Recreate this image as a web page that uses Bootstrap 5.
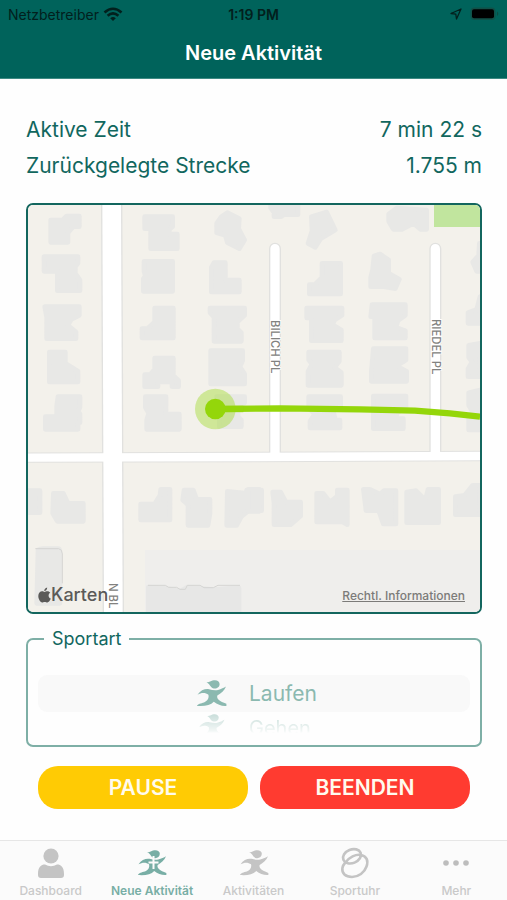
<!DOCTYPE html>
<html lang="de">
<head>
<meta charset="utf-8">
<meta name="viewport" content="width=device-width, initial-scale=1">
<title>Neue Aktivität</title>
<link href="https://cdn.jsdelivr.net/npm/bootstrap@5.3.0/dist/css/bootstrap.min.css" rel="stylesheet">
<style>
body{font-family:Inter,"Liberation Sans",sans-serif;color:#11675e;background:#fefefe}
.app-head{background:#00635b;border-bottom:1px solid #3d8a83}
.status-row{height:28px;font-size:14px;color:#02201d}
.status-row>*{flex:1 1 0}
.status-time{font-weight:600}
.app-title{font-size:20px;line-height:50px;font-weight:600;color:#fff}
.main-area{padding:33px 25px 29px 26px}
.stat-list{font-size:21px;line-height:36px}
.map-frame{border:2px solid #13665e;border-radius:7px;background:#f3f1eb;margin-top:19px}
.map-brand{left:10px;bottom:6px;font-size:18px;line-height:22px;color:#5b5a58}
.map-legal{right:15px;bottom:9px;font-size:12px;line-height:15px;font-weight:500;color:#7c7b79}
.map-legal:hover{color:#5b5a58}
.sport-box{border:2px solid #7eafa6;border-radius:7px;margin-top:13px;padding:0 10px 12px}
.sport-box legend{font-size:18px;line-height:24px;margin:0 0 0 6px;padding:0 8px}
.picker{height:82px;padding-top:24px}
.picker label{height:37px;font-size:21px;color:#8bb9b0;border-radius:9px;gap:22px;padding-left:159px}
.picker label span{line-height:37px}
.picker input:checked+label{background:#f9f9f9}
.picker input:not(:checked)+label{align-items:flex-start!important;-webkit-mask-image:linear-gradient(rgba(0,0,0,.5),rgba(0,0,0,.1) 19px,transparent 21px);mask-image:linear-gradient(rgba(0,0,0,.5),rgba(0,0,0,.1) 19px,transparent 21px);font-size:20px}
.picker input:not(:checked)+label span{line-height:32px}
.action-row{margin-top:19px;padding:0 12px}
.action-row .btn{height:43px;border-radius:20px;font-size:21px;line-height:28px;font-weight:600;border:0;padding:0;color:#fffbee}
.btn-pause,.btn-pause:hover{background:#ffcb04}
.btn-stop,.btn-stop:hover{background:#ff3b30}
.tab-row{background:#fbfbfb;border-top:1px solid #e6e6e6;height:60px;padding-top:6px}
.tab-row a{color:#c9c9c9;font-size:12px;line-height:16px;font-weight:500;gap:3px}
.tab-row a.active{color:#78aea5;font-weight:600}
.map-label{font-family:Inter,sans-serif;font-weight:500;font-size:34px;fill:#828280;stroke:#fff;stroke-width:5px;paint-order:stroke}
</style>
</head>
<body class="d-flex flex-column min-vh-100">
<svg width="0" height="0" class="position-absolute" aria-hidden="true">
<symbol id="runner" viewBox="0 0 30 27"><path d="M9.500 2.200C12 2.600 13.500 1.400 15.500.6C19-.6 22.600.8 22.600 4C22.600 7.600 19 9.300 15.900 8.200C13.300 7.200 12.800 3.800 9.500 2.200Z"/><path d="M.5 14.800C3.500 10.200 8 8.600 12 9.200C15 9.900 18 10.600 21 9.900C24.300 9.200 26.800 7.800 29 6.600C27.600 10.600 24 13.700 20.300 15.600C19.400 19 22.600 21.400 29.400 23.800V26C25 26.500 20.500 24.600 16.800 21.800C13.500 25.400 8 26.500 0 26C.6 23.800 4 23.300 7 22.400C10.500 21.200 12.300 18 11.400 14.800C8.500 12.500 4.300 12.600.5 14.800Z"/></symbol>
</svg>
<header class="app-head text-center">
<div class="status-row d-flex align-items-center px-2">
<div class="d-flex align-items-center gap-1"><span>Netzbetreiber</span>
<svg width="20" height="15" viewBox="0 0 20 15" fill="none" stroke="#02201d" stroke-width="2.600" role="img" aria-label="WLAN"><path d="M1.500 5.500Q10-2 18.500 5.500M4.600 8.800Q10 4 15.400 8.800"/><path d="M7.200 11.300Q10 8.600 12.800 11.300L10 14Z" fill="#02201d" stroke="none"/></svg></div>
<div class="status-time">1:19 PM</div>
<div class="d-flex align-items-center justify-content-end gap-2">
<svg width="12" height="12" viewBox="0 0 12 12" fill="none" stroke="#02201d" stroke-width="1.300" stroke-linejoin="round" role="img" aria-label="Standort"><path d="M11 1L1 5.500L5.800 6.200L6.500 11Z"/></svg>
<svg width="29" height="14" viewBox="0 0 29 14" role="img" aria-label="Batterie voll"><rect x=".5" y=".5" width="25" height="12.500" rx="4" fill="#115148"/><rect x="2" y="2.300" width="22" height="9" rx="2" fill="#000"/><path d="M27 4.500Q29.500 6.700 27 9Z" fill="#0d4a43"/></svg></div>
</div>
<h1 class="app-title mb-0">Neue Aktivität</h1>
</header>

<main class="main-area flex-grow-1">
<dl class="stat-list mb-0">
<div class="d-flex justify-content-between"><dt class="fw-normal">Aktive Zeit</dt><dd class="mb-0">7 min 22 s</dd></div>
<div class="d-flex justify-content-between"><dt class="fw-normal">Zurückgelegte Strecke</dt><dd class="mb-0">1.755 m</dd></div>
</dl>

<section class="map-frame position-relative overflow-hidden" aria-label="Karte">
<svg class="d-block w-100" viewBox="84 615 1356 1222">
<rect x="84" y="615" width="1356" height="1222" fill="#f3f1eb"/>
<path d="M435 1650H1440V1840H435Z" fill="#efeeec"/>
<path d="M1302 615H1440V681H1302Z" fill="#c1e59e"/>
<g fill="none" stroke="#e1e1df">
<path d="M335 600L340 1840" stroke-width="64"/>
<path d="M84 1373L760 1371L1440 1368" stroke-width="31"/>
<path d="M825 746V1361M1306 746V1361" stroke-width="36" stroke-linecap="round"/>
</g>
<g fill="none" stroke="#fff">
<path d="M335 600L340 1840" stroke-width="56"/>
<path d="M84 1373L760 1371L1440 1368" stroke-width="25"/>
<path d="M825 746V1361M1306 746V1361" stroke-width="28" stroke-linecap="round"/>
</g>
<g fill="#e8e8e6" stroke="#e8e8e6" stroke-width="14" stroke-linejoin="round">
<g transform="translate(60 600)">
<path d="M92 60H128L140 48H178V80H160L144 98V127H92Z"/>
<path d="M72 170H174V190L166 200V220L180 240V272H112V214H72Z"/>
<path d="M74 320H178V346L154 358L144 376L168 396V416H80V352Z"/>
<path d="M88 456H136V490L174 514V546H88Z"/>
<path d="M114 590H180V622L174 634L180 642V668H174V688H76V650H110V618Z"/>
<path d="M374 50H458V80L448 88V102H472V146H392V86H374Z"/>
<path d="M372 184H458V274H370V236L376 228L372 214Z"/>
<path d="M404 324H460V414H366V386H382L404 366Z"/>
<path d="M404 474H460V526L476 542V560H456V546H414V560H374V524H390L404 508Z"/>
<path d="M376 590H438V642H478V688H380V660L386 640L376 622Z"/>
<path d="M622 38L658 56L656 86L674 120L658 146L622 128L616 106L590 98V70L604 50Z"/>
<path d="M582 188H616V240H658V276H574V202Z"/>
<path d="M570 324H674V346L652 366V386L664 398V424H582V352L570 338Z"/>
<path d="M572 452H668V482L660 500L674 522V552H572Z"/>
<path d="M590 590H674V608L654 630V650L664 660V680H598V640Z"/>
</g>
<g transform="translate(750 600)">
<path d="M62 12H144V44H102L94 50H72V38L62 24Z"/>
<path d="M184 50L230 36L256 90L212 116L196 142L174 130L186 92Z"/>
<path d="M416 42L440 24L530 30V88H512L490 70L456 88H430L416 64Z"/>
<path d="M216 190H272V282H178V254H194L216 232Z"/>
<path d="M372 168L390 162L416 180V220L448 238L436 266L402 260H362V232L368 208Z"/>
<path d="M170 324H276V346L254 360L248 374L274 390V422H184V354H170Z"/>
<path d="M176 456H268V484L254 502L274 518V556H174V514L186 492L176 480Z"/>
<path d="M176 590H272V620L250 632L256 660L270 660V684H180V664L194 642L176 624Z"/>
<path d="M366 314H466V346L444 362L438 382L466 392V414H374V350H362Z"/>
<path d="M370 446H468V480L440 498L470 514V544H364V514Z"/>
<path d="M370 588H468V624L442 638L436 656H460V686H370Z"/>
<path d="M688 130V214H680L668 186L686 166ZM690 290V370H654V338L680 328ZM690 430V530H654V506L666 486L656 472V436ZM690 570V690H656V652L668 636L656 616V578Z"/>
</g>
<g transform="translate(60 1200)">
<path d="M20 272H60V338H20ZM100 280H130L144 310H190V364H112L98 340Z"/>
<path d="M54 450Q60 446 68 446H116Q120 448 120 456V610H50Z"/>
<path d="M422 268H450V360H362V312H404L420 286Z"/>
<path d="M492 270H520L530 298H570V340L564 376H504V314L488 300Z"/>
<path d="M622 274L680 280V270H725V298V332H686L664 350L650 376H620Z"/>
</g>
<g transform="translate(750 1200)">
<path d="M-5 268H28V334H-5ZM68 276H92L108 306L152 306V348L122 374H72V310ZM200 280H220L240 306L262 288V270H292V374L278 366H200ZM340 268H360L390 282L402 272H438V372H400L386 332H348ZM470 276L498 272L526 300L534 268H566V368H470ZM616 290L644 286L668 256H690V344H616Z"/>
</g>
</g>
<path d="M438 1762Q438 1754 446 1754L500 1758L540 1766L560 1754L640 1762L718 1756Q724 1758 724 1764V1840H438Z" fill="#e7e7e6"/>
<path d="M444 1756L496 1756L506 1762H530L540 1768H556L562 1756L600 1756L612 1763H640L654 1756H720M106 1646H176Q187 1648 187 1662V1750" fill="none" stroke="#d5d5d3" stroke-width="3"/>
<path d="M646 1227L840 1225L1080 1228L1245 1232L1350 1240L1440 1250" fill="none" stroke="#94d60a" stroke-width="19"/>
<circle cx="646" cy="1227" r="61" fill="#a8dc3d" fill-opacity=".48"/>
<path d="M646 1227H730" stroke="#94d60a" stroke-width="19"/>
<circle cx="646" cy="1227" r="31" fill="#94d60a"/>
<text class="map-label" transform="translate(814 960) rotate(90)">BILICH PL</text>
<text class="map-label" transform="translate(1295 957) rotate(90)">RIEDEL PL</text>
<text class="map-label" transform="translate(328 1749) rotate(90)">N BL</text>
</svg>
<div class="map-brand position-absolute d-flex align-items-center fw-medium">
<svg width="13" height="16" viewBox="0 0 13 16" fill="currentColor" aria-hidden="true"><path d="M9.200.5C9.300 2.300 8 4 6.200 4.100C6 2.500 7.500.8 9.200.5Z"/><path d="M6.400 4.900C7.200 4.900 8 4.200 9.300 4.200C10.600 4.200 11.700 4.900 12.300 5.700C9.800 7.100 10.200 10.600 12.800 11.600C12 13.700 10.700 15.500 9.400 15.500C8.300 15.500 7.900 14.900 6.700 14.900C5.500 14.900 5.100 15.500 4.100 15.500C2.300 15.500.3 12.100.3 9.100C.3 6 2.200 4.300 4.100 4.300C5.200 4.300 5.900 4.900 6.400 4.900Z"/></svg><span>Karten</span></div>
<a class="map-legal position-absolute" href="#recht">Rechtl. Informationen</a>
</section>

<fieldset class="sport-box">
<legend class="float-none w-auto">Sportart</legend>
<div class="picker overflow-hidden">
<input class="visually-hidden" type="radio" name="sport" id="laufen" checked>
<label for="laufen" class="d-flex align-items-center"><svg width="30" height="27" fill="currentColor" aria-hidden="true"><use href="#runner"/></svg><span>Laufen</span></label>
<input class="visually-hidden" type="radio" name="sport" id="gehen">
<label for="gehen" class="d-flex align-items-center"><svg width="30" height="27" fill="currentColor" aria-hidden="true"><use href="#runner" y="2" width="30" height="24"/></svg><span>Gehen</span></label>
</div>
</fieldset>

<div class="action-row d-flex">
<button type="button" class="btn btn-pause flex-fill w-50 me-2">PAUSE</button>
<button type="button" class="btn btn-stop flex-fill w-50 ms-1">BEENDEN</button>
</div>
</main>

<nav class="tab-row d-flex" aria-label="Hauptnavigation">
<a href="#dashboard" class="col d-flex flex-column align-items-center text-decoration-none"><svg width="32" height="33" viewBox="0 0 32 33" fill="#c4c4c4" aria-hidden="true"><circle cx="16" cy="9" r="7.600"/><path d="M3 27C3 20 6 17.500 10 17.500Q16 21 22 17.500C26 17.500 29 20 29 27V28Q29 31 26 31H6Q3 31 3 28Z"/></svg><span>Dashboard</span></a>
<a href="#neu" class="active col d-flex flex-column align-items-center text-decoration-none" aria-current="page"><svg width="32" height="33" viewBox="0 0 32 33" fill="currentColor" aria-hidden="true"><use href="#runner" x="2" y="3" width="29" height="26"/><path d="M17.500 9V22M12.500 15.500H22.500" stroke="#fbfbfb" stroke-width="2"/></svg><span>Neue Aktivität</span></a>
<a href="#aktivitaeten" class="col d-flex flex-column align-items-center text-decoration-none"><svg width="32" height="33" viewBox="0 0 32 33" fill="#c4c4c4" aria-hidden="true"><use href="#runner" x="2" y="3" width="29" height="26"/></svg><span>Aktivitäten</span></a>
<a href="#sportuhr" class="col d-flex flex-column align-items-center text-decoration-none"><svg width="32" height="33" viewBox="0 0 32 33" fill="none" stroke="#c4c4c4" stroke-width="2.600" aria-hidden="true"><ellipse cx="13" cy="9.300" rx="9.300" ry="6.800" transform="rotate(-22 13 9.300)"/><path d="M6 16C10 10 17 7 22 8C28 9.200 29.500 14 27.500 19.500C25.500 25.500 19.500 30 13 30C6.500 30 2.600 26.500 3.400 21C3.800 18.500 4.600 17.500 6 16Z"/></svg><span>Sportuhr</span></a>
<a href="#mehr" class="col d-flex flex-column align-items-center text-decoration-none"><svg width="32" height="33" viewBox="0 0 32 33" fill="#bdbdbd" aria-hidden="true"><circle cx="6" cy="16" r="2.800"/><circle cx="16" cy="16" r="2.800"/><circle cx="26" cy="16" r="2.800"/></svg><span>Mehr</span></a>
</nav>
<script src="https://cdn.jsdelivr.net/npm/bootstrap@5.3.0/dist/js/bootstrap.bundle.min.js"></script>
</body>
</html>
